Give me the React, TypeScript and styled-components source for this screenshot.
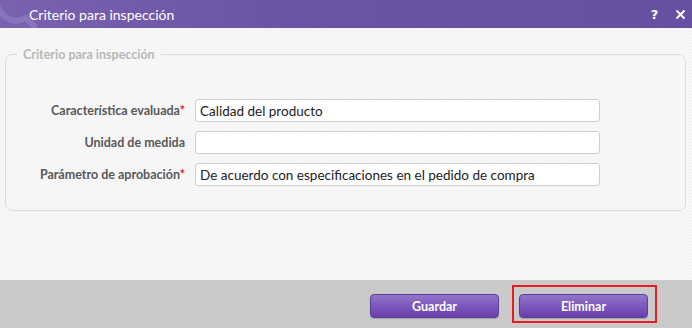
import React from 'react';
import styled, { createGlobalStyle } from 'styled-components';

const GlobalStyle = createGlobalStyle`
  html, body {
    margin: 0;
    padding: 0;
    width: 692px;
    height: 328px;
    overflow: hidden;
  }
  body {
    font-family: Lato, 'Open Sans', sans-serif;
  }
`;

const fields = [
  { label: 'Característica evaluada', required: true, value: 'Calidad del producto' },
  { label: 'Unidad de medida', required: false, value: '' },
  { label: 'Parámetro de aprobación', required: true, value: 'De acuerdo con especificaciones en el pedido de compra' },
];

export default function App() {
  return (
    <Dialog>
      <GlobalStyle />
      <TitleBar>
        <Logo width="40" height="28" viewBox="0 0 40 28">
          <path d="M-2 6 C 2 20, 16 24, 26 18 L 34 26" fill="none" stroke="#8f7cc2" strokeWidth="6" strokeLinecap="round" opacity="0.7" />
        </Logo>
        <Title>Criterio para inspección</Title>
        <TitleActions>
          <TitleIcon>?</TitleIcon>
          <TitleIcon>
            <svg width="11" height="11" viewBox="0 0 11 11">
              <path d="M1.5 1.5 L9.5 9.5 M9.5 1.5 L1.5 9.5" stroke="#fff" strokeWidth="2" />
            </svg>
          </TitleIcon>
        </TitleActions>
      </TitleBar>

      <Body>
        <Group>
          <Legend>Criterio para inspección</Legend>
          <Rows>
            {fields.map((f) => (
              <Row key={f.label}>
                <Label>
                  {f.label}
                  {f.required && <Star>*</Star>}
                </Label>
                <Input defaultValue={f.value} />
              </Row>
            ))}
          </Rows>
        </Group>
      </Body>

      <Footer>
        <Button $offset={9}>Guardar</Button>
        <Highlight>
          <Button>Eliminar</Button>
        </Highlight>
      </Footer>
    </Dialog>
  );
}

const Dialog = styled.div`
  width: 692px;
  height: 328px;
  display: flex;
  flex-direction: column;
  background-color: #f7f7f7;
  background-image: radial-gradient(#efefef 0.6px, transparent 0.8px);
  background-size: 3px 3px;
`;

const TitleBar = styled.div`
  position: relative;
  height: 28px;
  flex-shrink: 0;
  display: flex;
  align-items: center;
  background: linear-gradient(90deg, #7a62b0 0%, #6b54a6 40%, #6650a2 100%);
  color: #fff;
  overflow: hidden;
`;

const Logo = styled.svg`
  position: absolute;
  left: 0;
  top: 0;
`;

const Title = styled.div`
  margin-left: 29px;
  font-size: 14px;
  flex: 1;
`;

const TitleActions = styled.div`
  display: flex;
  align-items: center;
  gap: 15px;
  margin-right: 6px;
`;

const TitleIcon = styled.span`
  width: 11px;
  display: flex;
  justify-content: center;
  font-weight: bold;
  font-size: 13px;
  font-family: 'DejaVu Sans', sans-serif;
`;

const Body = styled.div`
  flex: 1;
  padding: 19px 6px 0 5px;
`;

const Group = styled.fieldset`
  margin: 0;
  padding: 0;
  height: 164px;
  box-sizing: border-box;
  border: 1px solid #dcdcdc;
  border-radius: 7px;
`;

const Legend = styled.legend`
  margin-left: 11px;
  padding: 0 6px;
  color: #b8b8b8;
  font-size: 12.5px;
  font-weight: bold;
`;

const Rows = styled.div`
  display: flex;
  flex-direction: column;
  gap: 9px;
  margin-top: 37px;
`;

const Row = styled.div`
  display: flex;
  align-items: center;
`;

const Label = styled.label`
  width: 179px;
  text-align: right;
  font-size: 12.5px;
  font-weight: bold;
  color: #585858;
`;

const Star = styled.span`
  color: #e02020;
`;

const Input = styled.input`
  margin-left: 10px;
  width: 405px;
  height: 23px;
  box-sizing: border-box;
  padding: 0 4px;
  border: 1px solid #cfcfcf;
  border-radius: 3px;
  background: #fff;
  font-family: Lato, 'Open Sans', sans-serif;
  font-size: 13.5px;
  color: #222;
  outline: none;
`;

const Footer = styled.div`
  height: 48px;
  flex-shrink: 0;
  box-sizing: border-box;
  background: #cacaca;
  display: flex;
  align-items: flex-start;
  justify-content: flex-end;
  gap: 13px;
  padding: 5px 35px 0 0;
`;

const Highlight = styled.div`
  border: 2px solid #e51c23;
  padding: 7px 7px 3px 5px;
  display: flex;
`;

const Button = styled.button<{ $offset?: number }>`
  margin-top: ${(p) => p.$offset ?? 0}px;
  width: 129px;
  height: 24px;
  border: 1px solid #5b3f99;
  border-radius: 4px;
  background: linear-gradient(180deg, #9275cb 0%, #7b58bb 50%, #6a40ac 100%);
  color: #fff;
  font-family: Lato, 'Open Sans', sans-serif;
  font-size: 12.5px;
  font-weight: bold;
  box-shadow: 0 1px 1px rgba(0, 0, 0, 0.2);
  cursor: pointer;
`;
